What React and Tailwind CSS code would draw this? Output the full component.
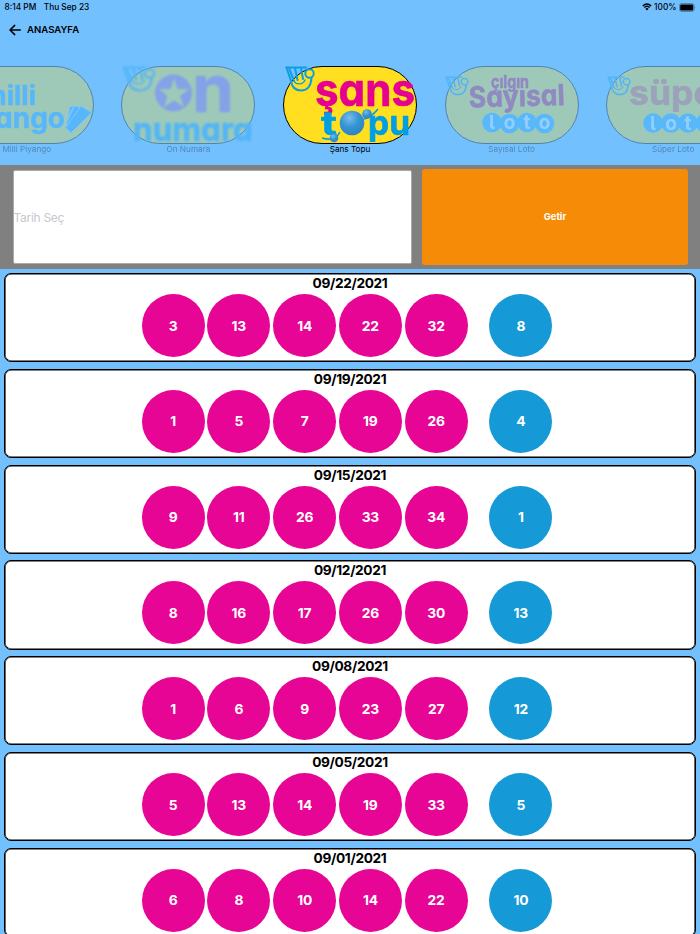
const draws = [
  { date: "09/22/2021", numbers: [3, 13, 14, 22, 32], bonus: 8 },
  { date: "09/19/2021", numbers: [1, 5, 7, 19, 26], bonus: 4 },
  { date: "09/15/2021", numbers: [9, 11, 26, 33, 34], bonus: 1 },
  { date: "09/12/2021", numbers: [8, 16, 17, 26, 30], bonus: 13 },
  { date: "09/08/2021", numbers: [1, 6, 9, 23, 27], bonus: 12 },
  { date: "09/05/2021", numbers: [5, 13, 14, 19, 33], bonus: 5 },
  { date: "09/01/2021", numbers: [6, 8, 10, 14, 22], bonus: 10 },
];

// Text inside a logo, stretched to a given width
function Word({ x, y, size, width, fill, children }) {
  return (
    <text
      x={x}
      y={y}
      fontSize={size}
      textLength={width}
      lengthAdjust="spacingAndGlyphs"
      fill={fill}
      stroke={fill}
      strokeWidth=".6"
      strokeLinejoin="round"
    >
      {children}
    </text>
  );
}

function Hand({ transform }) {
  return (
    <g transform={transform} fill="none" stroke="#0a9fe3" strokeWidth="2" strokeLinejoin="round" strokeLinecap="round">
      <path d="M1.5 1.5 L6 15 C7 21.5 11 24.5 16 24.5 C23 24.5 26 19 26.5 12" />
      <path d="M1.5 1.5 H21 M4 2 L9 15 M10 2 L12.5 14 M16 2 L18 13" />
      <circle cx="24.5" cy="7.5" r="4.2" />
      <path d="M9 15 C11 19 18 19 20 14" strokeWidth="1.4" />
    </g>
  );
}

function Loto({ points, letterY }) {
  return (
    <g>
      {points.map(([cx, cy], i) => (
        <circle key={i} cx={cx} cy={cy} r="9.8" fill="#1fa8f0" />
      ))}
      {points.map(([cx], i) => (
        <text
          key={i}
          x={cx}
          y={letterY}
          fontSize="19"
          textAnchor="middle"
          fill="#d8f0ff"
          className="[font-feature-settings:'cv05']"
        >
          {"loto"[i]}
        </text>
      ))}
    </g>
  );
}

function MilliLogo() {
  return (
    <g fill="#1aa5f0">
      <g stroke="#1aa5f0" strokeWidth=".5">
        <text x="76" y="38.5" fontSize="27" textAnchor="end">milli</text>
        <text x="105" y="61.5" fontSize="28" textAnchor="end">piyango</text>
      </g>
      <g stroke="#8fd2ff" strokeWidth="1" strokeLinejoin="round">
        <path d="M109.5 41 L114 40 L108 52 Z" />
        <path d="M114.5 40 L120 41 L109 58 L106 58 Z" />
        <path d="M121 40 L131.7 46.5 L111 67 L105.5 61.5 Z" />
      </g>
    </g>
  );
}

function OnLogo() {
  return (
    <g>
      <Hand transform="translate(1 0) scale(1.12 1)" />
      <circle cx="52.5" cy="27" r="18.5" fill="#a860b4" />
      <path
        d="M53 12 L56.5 23 L68 23 L59 30 L63 41 L53 34.5 L43 41 L46.5 30 L38 23 L49.5 23 Z"
        fill="#ffdf20"
      />
      <Word x="71" y="46" size="66" width="42" fill="#a860b4">n</Word>
      <Word x="12" y="75" size="33" width="120" fill="#0a9fe3">numara</Word>
    </g>
  );
}

function SansLogo() {
  return (
    <g>
      <defs>
        <radialGradient id="ball" cx=".4" cy=".3" r=".75">
          <stop offset="0" stopColor="#78bdea" />
          <stop offset=".5" stopColor="#3494d4" />
          <stop offset="1" stopColor="#2f83bc" />
        </radialGradient>
      </defs>
      <Hand transform="translate(2 0)" />
      <Word x="32" y="39.5" size="45" width="100" fill="#e5008f">şans</Word>
      <Word x="38" y="69" size="33" width="16" fill="#009fe3">t</Word>
      <Word x="85" y="69" size="34" width="42" fill="#009fe3">pu</Word>
      <path d="M39 72 Q52 76 57 66 M78 54 Q88 52 95 43" fill="none" stroke="#009fe3" strokeWidth="1.6" />
      <circle cx="51" cy="72" r="4.3" fill="url(#ball)" />
      <circle cx="84" cy="48" r="4.8" fill="url(#ball)" />
      <circle cx="69" cy="57" r="12.3" fill="url(#ball)" />
    </g>
  );
}

function SayisalLogo() {
  return (
    <g>
      <Hand transform="translate(0 10) scale(.8 .76)" />
      <Word x="46" y="21.5" size="17" width="38" fill="#d3103e">çılgın</Word>
      <g transform="rotate(-1.5 24 40)">
        <Word x="24" y="41.5" size="29" width="96" fill="#d3103e">Sayısal</Word>
      </g>
      <Loto points={[[47, 56.5], [64.5, 57.5], [82, 56.5], [99.5, 57.5]]} letterY={62.5} />
    </g>
  );
}

function SuperLogo() {
  return (
    <g>
      <Hand transform="translate(1 10) scale(.8 .76)" />
      <Word x="23" y="38.5" size="34" width="100" fill="#f96020">süper</Word>
      <Loto points={[[47, 57], [65, 57], [82, 57], [99.5, 57]]} letterY={63.5} />
    </g>
  );
}

const games = [
  { name: "Milli Piyango", Logo: MilliLogo, blur: "" },
  { name: "On Numara", Logo: OnLogo, blur: "blur-[0.9px]" },
  { name: "Şans Topu", Logo: SansLogo, blur: "blur-[0.7px]", active: true },
  { name: "Sayısal Loto", Logo: SayisalLogo, blur: "blur-[0.6px]" },
  { name: "Süper Loto", Logo: SuperLogo, blur: "blur-[0.4px]" },
];

function StatusBar() {
  return (
    <div className="flex h-[14px] shrink-0 items-center justify-between pr-[4px] pl-[4.5px] text-[8.3px] font-medium">
      <div className="flex gap-[7.5px]">
        <span>8:14 PM</span>
        <span>Thu Sep 23</span>
      </div>
      <div className="flex items-center gap-[2.5px]">
        <svg className="h-[8px] w-[10px]" viewBox="0 0 20 16">
          <path d="M1.5 6 Q10 -2 18.5 6 M4.6 9.2 Q10 4 15.4 9.2" fill="none" stroke="#000" strokeWidth="2.7" />
          <path d="M6.8 11.6 Q10 8.8 13.2 11.6 L10 15 Z" />
        </svg>
        <span>100%</span>
        <svg className="h-[9px] w-[17px]" viewBox="0 0 17 9">
          <rect x=".4" y=".6" width="14.6" height="7.8" rx="2" fill="none" stroke="#3c6285" strokeWidth=".7" />
          <rect x="1.2" y="1.5" width="13" height="6" rx="1.2" />
          <path d="M15.8 3.2 q1.2 1.3 0 2.6 Z" fill="#3c6285" />
        </svg>
      </div>
    </div>
  );
}

function Game({ name, Logo, blur, active }) {
  return (
    <div className={`flex w-[134px] shrink-0 flex-col items-center ${active ? "" : "opacity-31"}`}>
      <div className="h-[78px] w-full rounded-full border border-black bg-[#ffdf20]">
        <svg
          className={`-m-px h-[78px] w-[134px] overflow-visible font-bold [font-feature-settings:'cv11'] ${blur}`}
          viewBox="0 0 134 78"
        >
          <Logo />
        </svg>
      </div>
      <span className="text-[8.2px] leading-[10px] whitespace-nowrap">{name}</span>
    </div>
  );
}

function Ball({ value, className }) {
  return (
    <div className={`flex size-[63px] items-center justify-center rounded-full pt-px text-[13.8px] font-bold tracking-[-0.2px] text-white ${className}`}>
      {value}
    </div>
  );
}

function DrawCard({ date, numbers, bonus }) {
  return (
    <div className="h-[89.3px] shrink-0 rounded-[7px] border border-black bg-white shadow-[inset_0_0_0_0.6px_#000]">
      <h2 className="text-center text-[13.7px] leading-[18px] font-bold tracking-[-0.35px]">{date}</h2>
      <div className="mt-[2px] flex gap-[2.75px] pl-[136.6px]">
        {numbers.map((n) => (
          <Ball key={n} value={n} className="bg-[#e60594]" />
        ))}
        <Ball value={bonus} className="ml-[19px] bg-[#159ad7]" />
      </div>
    </div>
  );
}

export default function App() {
  return (
    <div className="flex h-[934px] w-[700px] flex-col overflow-hidden bg-[#73c0ff] font-['Inter','Liberation_Sans',sans-serif] text-black">
      <StatusBar />
      <header className="flex h-[32px] shrink-0 items-center gap-[6px] pl-[9px]">
        <svg className="size-[12px]" viewBox="0 0 12 12" fill="none" stroke="#000" strokeWidth="1.5">
          <path d="M5.7 1.4 L1 6 L5.7 10.6 M1 6 H11.3" strokeLinecap="round" strokeLinejoin="round" />
        </svg>
        <span className="text-[9.6px] font-semibold">ANASAYFA</span>
      </header>

      <nav className="flex h-[119px] shrink-0 justify-center gap-[27.6px] overflow-hidden pt-[20px]">
        {games.map((game) => (
          <Game key={game.name} {...game} />
        ))}
      </nav>

      <div className="flex h-[104px] shrink-0 bg-[#808080] pt-[4px] pr-[12px] pb-[4px] pl-[12.5px]">
        <input
          className="my-[1px] w-[399px] rounded-[2px] border border-[#aaa] bg-white pt-px text-[12px] tracking-[-0.3px] placeholder:text-[#c7c7cd]"
          placeholder="Tarih Seç"
        />
        <button className="ml-[10.5px] flex-1 rounded-[3px] bg-[#f58b07] text-[9.4px] font-bold text-white">
          Getir
        </button>
      </div>

      <main className="flex flex-col gap-[6.5px] px-[4px] pt-[4px]">
        {draws.map((draw) => (
          <DrawCard key={draw.date} {...draw} />
        ))}
      </main>
    </div>
  );
}
